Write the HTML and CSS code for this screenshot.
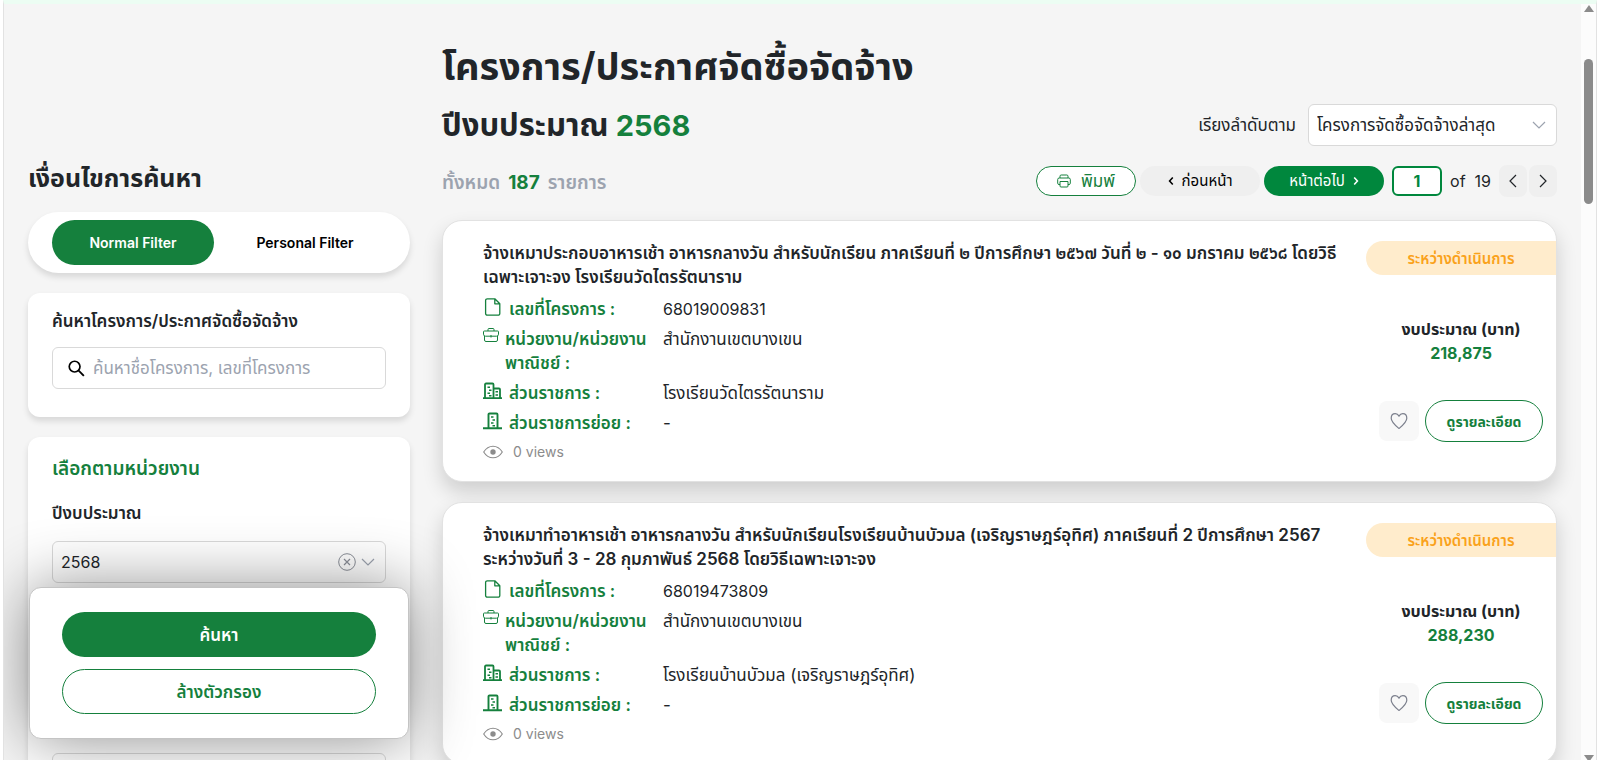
FILE: index.html
```html
<!DOCTYPE html>
<html lang="th">
<head>
    <meta charset="UTF-8">
    <meta name="viewport" content="width=device-width, initial-scale=1.0">
    <title>โครงการ/ประกาศจัดซื้อจัดจ้าง</title>
    <link rel="stylesheet" href="styles.css">
</head>
<body>

<svg class="sprite" aria-hidden="true">
    <symbol id="i-file" viewBox="0 0 19 18">
        <path d="M4.300 .8h7.500l5 5v9.700a1.700 1.700 0 0 1-1.700 1.700H4.300a1.700 1.700 0 0 1-1.700-1.700v-13A1.700 1.700 0 0 1 4.300.8zM11.800.8v5h5" fill="none" stroke="currentColor" stroke-width="1.300" stroke-linejoin="round"/>
    </symbol>
    <symbol id="i-case" viewBox="0 0 16 14">
        <path d="M5 3V1.500a1 1 0 0 1 1-1h4a1 1 0 0 1 1 1V3M1.300 3h13.400a.8.8 0 0 1 .8.800v2.400a2 2 0 0 1-2 2h-11a2 2 0 0 1-2-2V3.800a.8.800 0 0 1 .8-.8zM1.500 8v4a1.500 1.500 0 0 0 1.500 1.500h10a1.500 1.500 0 0 0 1.500-1.500V8M8 7v2.500" fill="none" stroke="currentColor" stroke-width="1"/>
    </symbol>
    <symbol id="i-dept" viewBox="0 0 19 18">
        <path d="M0 16.200h19M2 16V2.500a1 1 0 0 1 1-1h6.500a1 1 0 0 1 1 1V16M11 6.500h5a1 1 0 0 1 1 1V16" fill="none" stroke="currentColor" stroke-width="1.800"/>
        <path d="M4.500 5.200H7M6 8.200h2.500M4.500 11.200H7M6 13.700h2.500M12.500 9.700h2.500M12.500 13h2.500" stroke="currentColor" stroke-width="1.400"/>
    </symbol>
    <symbol id="i-sub" viewBox="0 0 19 18">
        <path d="M0 16.200h19M5.500 16V2.500a1 1 0 0 1 1-1h7a1 1 0 0 1 1 1V16" fill="none" stroke="currentColor" stroke-width="1.900"/>
        <path d="M8 5h2.500M9.500 8H12M8 11h2.500M9.500 13.700H12" stroke="currentColor" stroke-width="1.400"/>
    </symbol>
    <symbol id="i-eye" viewBox="0 0 20 14">
        <path d="M.7 7C3 3.200 6.200 1.200 10 1.200S17 3.200 19.300 7C17 10.800 13.800 12.800 10 12.800S3 10.800.7 7z" fill="none" stroke="currentColor" stroke-width="1.100"/>
        <circle cx="10" cy="7" r="2.700" fill="currentColor"/>
    </symbol>
    <symbol id="i-heart" viewBox="0 0 18 18">
        <path d="M9 16.500C5.500 13.500 1.200 10 1.200 6.200c0-2.800 1.800-4.600 4-4.600 1.800 0 3 1 3.800 2.500.8-1.500 2-2.500 3.800-2.500 2.200 0 4 1.800 4 4.600 0 3.800-4.300 7.300-7.800 10.300z" fill="none" stroke="currentColor" stroke-width="1.200" stroke-linejoin="round"/>
    </symbol>
    <symbol id="i-down" viewBox="0 0 14 8">
        <path d="M1 1l6 6 6-6" fill="none" stroke="currentColor" stroke-width="1.200"/>
    </symbol>
    <symbol id="i-left" viewBox="0 0 8 14">
        <path d="M7 1L1 7l6 6" fill="none" stroke="currentColor" stroke-width="1.200"/>
    </symbol>
    <symbol id="i-right" viewBox="0 0 8 14">
        <path d="M1 1l6 6-6 6" fill="none" stroke="currentColor" stroke-width="1.200"/>
    </symbol>
</svg>

<div class="page">
    <aside class="sidebar">
        <h2>เงื่อนไขการค้นหา</h2>

        <div class="tabs">
            <button type="button" class="tab active">Normal Filter</button>
            <button type="button" class="tab">Personal Filter</button>
        </div>

        <div class="panel search-panel">
            <label for="keyword">ค้นหาโครงการ/ประกาศจัดซื้อจัดจ้าง</label>
            <div class="field search-field">
                <svg class="icon-search" viewBox="0 0 18 18"><circle cx="7" cy="7" r="5.700" fill="none" stroke="currentColor" stroke-width="1.800"/><path d="M11.300 11.300l5.500 5.500" stroke="currentColor" stroke-width="2"/></svg>
                <input type="text" id="keyword" placeholder="ค้นหาชื่อโครงการ, เลขที่โครงการ">
            </div>
        </div>

        <div class="panel filter-panel">
            <h3>เลือกตามหน่วยงาน</h3>
            <label for="year">ปีงบประมาณ</label>
            <div class="field">
                <select id="year" class="num">
                    <option>2568</option>
                    <option>2567</option>
                </select>
                <svg class="icon-clear" viewBox="0 0 18 18"><circle cx="9" cy="9" r="8.300" fill="none" stroke="currentColor"/><path d="M6 6l6 6M12 6l-6 6" stroke="currentColor" stroke-width="1.200"/></svg>
                <svg class="icon-down"><use href="#i-down"/></svg>
            </div>
            <label for="agency">หน่วยงาน</label>
            <div class="field agency-field">
                <select id="agency">
                    <option>สำนักงานเขต</option>
                </select>
            </div>
        </div>

        <div class="actions">
            <button type="button" class="btn-search">ค้นหา</button>
            <button type="button" class="btn-clear">ล้างตัวกรอง</button>
        </div>
    </aside>

    <main class="content">
        <h1>โครงการ/ประกาศจัดซื้อจัดจ้าง</h1>

        <div class="row year-row">
            <h2>ปีงบประมาณ <span class="green">2568</span></h2>
            <div class="sort">
                <label for="sort">เรียงลำดับตาม</label>
                <div class="field">
                    <select id="sort">
                        <option>โครงการจัดซื้อจัดจ้างล่าสุด</option>
                    </select>
                    <svg class="icon-down"><use href="#i-down"/></svg>
                </div>
            </div>
        </div>

        <div class="row count-row">
            <p class="count"><span>ทั้งหมด</span><span class="green">187</span><span>รายการ</span></p>
            <div class="pager">
                <button type="button" class="btn-print">
                    <svg viewBox="0 0 14 14"><path d="M3 4V2.200A1.200 1.200 0 0 1 4.200 1h5.600A1.200 1.200 0 0 1 11 2.200V4M3 10.500H2a1.300 1.300 0 0 1-1.300-1.300V5.500A1.500 1.500 0 0 1 2.200 4h9.600a1.500 1.500 0 0 1 1.500 1.500v3.700a1.300 1.300 0 0 1-1.300 1.300h-1M3 7.500h8V12a1 1 0 0 1-1 1H4a1 1 0 0 1-1-1z" fill="none" stroke="currentColor"/></svg>
                    พิมพ์
                </button>
                <button type="button" class="btn-page"><svg viewBox="0 0 8 14"><path d="M6.500 2L2 7l4.500 5" fill="none" stroke="currentColor" stroke-width="2.200"/></svg>ก่อนหน้า</button>
                <button type="button" class="btn-page next">หน้าต่อไป<svg viewBox="0 0 8 14"><path d="M1.500 2L6 7l-4.500 5" fill="none" stroke="currentColor" stroke-width="2.200"/></svg></button>
                <input type="text" class="page-input" value="1" aria-label="หน้า">
                <span class="page-total">of&nbsp; 19</span>
                <button type="button" class="btn-arrow" aria-label="ก่อนหน้า"><svg><use href="#i-left"/></svg></button>
                <button type="button" class="btn-arrow" aria-label="ถัดไป"><svg><use href="#i-right"/></svg></button>
            </div>
        </div>

        <article class="card">
            <div class="info">
                <h3>จ้างเหมาประกอบอาหารเช้า อาหารกลางวัน สำหรับนักเรียน ภาคเรียนที่ ๒ ปีการศึกษา ๒๕๖๗ วันที่ ๒ - ๑๐ มกราคม ๒๕๖๘ โดยวิธี<br>เฉพาะเจาะจง โรงเรียนวัดไตรรัตนาราม</h3>
                <dl>
                    <dt><svg><use href="#i-file"/></svg>เลขที่โครงการ :</dt>
                    <dd class="num">68019009831</dd>
                    <dt class="wide"><svg><use href="#i-case"/></svg><span>หน่วยงาน/หน่วยงาน<br>พาณิชย์ :</span></dt>
                    <dd>สำนักงานเขตบางเขน</dd>
                    <dt><svg><use href="#i-dept"/></svg>ส่วนราชการ :</dt>
                    <dd>โรงเรียนวัดไตรรัตนาราม</dd>
                    <dt><svg><use href="#i-sub"/></svg>ส่วนราชการย่อย :</dt>
                    <dd>-</dd>
                </dl>
                <p class="views"><svg><use href="#i-eye"/></svg>0 views</p>
            </div>
            <div class="side">
                <span class="status">ระหว่างดำเนินการ</span>
                <p class="budget">งบประมาณ (บาท)<br><span class="green">218,875</span></p>
                <div class="links">
                    <button type="button" class="btn-like" aria-label="ถูกใจ"><svg><use href="#i-heart"/></svg></button>
                    <a class="btn-detail" href="#">ดูรายละเอียด</a>
                </div>
            </div>
        </article>

        <article class="card">
            <div class="info">
                <h3>จ้างเหมาทำอาหารเช้า อาหารกลางวัน สำหรับนักเรียนโรงเรียนบ้านบัวมล (เจริญราษฎร์อุทิศ) ภาคเรียนที่ 2 ปีการศึกษา 2567<br>ระหว่างวันที่ 3 - 28 กุมภาพันธ์ 2568 โดยวิธีเฉพาะเจาะจง</h3>
                <dl>
                    <dt><svg><use href="#i-file"/></svg>เลขที่โครงการ :</dt>
                    <dd class="num">68019473809</dd>
                    <dt class="wide"><svg><use href="#i-case"/></svg><span>หน่วยงาน/หน่วยงาน<br>พาณิชย์ :</span></dt>
                    <dd>สำนักงานเขตบางเขน</dd>
                    <dt><svg><use href="#i-dept"/></svg>ส่วนราชการ :</dt>
                    <dd>โรงเรียนบ้านบัวมล (เจริญราษฎร์อุทิศ)</dd>
                    <dt><svg><use href="#i-sub"/></svg>ส่วนราชการย่อย :</dt>
                    <dd>-</dd>
                </dl>
                <p class="views"><svg><use href="#i-eye"/></svg>0 views</p>
            </div>
            <div class="side">
                <span class="status">ระหว่างดำเนินการ</span>
                <p class="budget">งบประมาณ (บาท)<br><span class="green">288,230</span></p>
                <div class="links">
                    <button type="button" class="btn-like" aria-label="ถูกใจ"><svg><use href="#i-heart"/></svg></button>
                    <a class="btn-detail" href="#">ดูรายละเอียด</a>
                </div>
            </div>
        </article>
    </main>

    <div class="scrollbar" aria-hidden="true">
        <span class="arrow up"></span>
        <span class="thumb"></span>
        <span class="arrow down"></span>
    </div>
</div>

</body>
</html>
```
FILE: styles.css
```css
* {
    box-sizing: border-box;
}

body {
    margin: 0;
    background: #fff;
    color: #212529;
    font-family: Inter, "Noto Sans Thai", "Noto Sans", sans-serif;
    font-size: 17px;
    line-height: 24px;
    height: 100vh;
    overflow: hidden;
}

h1, h2, h3, p, dl, dd {
    margin: 0;
}

button, input, select {
    font: inherit;
    color: inherit;
}

button {
    border: none;
    padding: 0;
    cursor: pointer;
}

.sprite {
    display: none;
}

.green {
    color: #15803d;
}

.page {
    display: flex;
    height: 100vh;
    margin: 0 2px 0 3px;
    border: solid #e2e2e2;
    border-width: 0 1px;
    border-top: 4px solid #ecfdf3;
    background: #f5f5f5;
    overflow: hidden;
}

/* sidebar */
.sidebar {
    flex: none;
    width: 382px;
    margin: 156px 32px 0 24px;
    position: relative;
}

.sidebar h2 {
    font-size: 25px;
    line-height: 36px;
    margin-bottom: 16px;
}

.tabs {
    display: flex;
    gap: 10px;
    padding: 8px 24px;
    background: #fff;
    border-radius: 32px;
    box-shadow: 0 4px 6px rgba(0, 0, 0, 0.12);
}

.tab {
    flex: 1;
    height: 45px;
    border-radius: 24px;
    background: none;
    color: #000;
    font-size: 14px;
    font-weight: 600;
}

.tab.active {
    background: #15803d;
    color: #fff;
}

.panel {
    margin-top: 20px;
    padding: 16px 24px;
    background: #fff;
    border-radius: 12px;
    box-shadow: 0 4px 6px rgba(0, 0, 0, 0.12);
}

.panel label {
    display: block;
    font-weight: 600;
}

.search-panel {
    height: 124px;
}

.field {
    display: flex;
    align-items: center;
    height: 42px;
    padding: 0 8px;
    border: 1px solid #d9d9d9;
    border-radius: 6px;
    background: #fff;
}

.field input, .field select {
    flex: 1;
    min-width: 0;
    height: 40px;
    padding: 0;
    border: none;
    outline: none;
    background: none;
    appearance: none;
}

.field input::placeholder {
    color: #9ca3af;
}

.search-field {
    margin-top: 14px;
    padding-left: 15px;
    gap: 8px;
}

.field .num, .num {
    font-size: 16px;
}

.icon-search {
    width: 17px;
    height: 17px;
    color: #000;
}

.icon-clear {
    width: 18px;
    height: 18px;
    margin-right: 5px;
    color: #8b8f98;
}

.icon-down {
    width: 14px;
    height: 8px;
    margin-right: 2px;
    color: #9ca3af;
}

.filter-panel {
    height: 400px;
}

.filter-panel h3 {
    margin-bottom: 16px;
    font-size: 19px;
    font-weight: 600;
    line-height: 32px;
    color: #15803d;
}

.filter-panel .field {
    margin: 16px 0 24px;
}

.filter-panel .agency-field {
    margin-top: 122px;
}

/* floats over the filter list */
.actions {
    position: absolute;
    top: 427px;
    left: 1px;
    right: 1px;
    display: flex;
    flex-direction: column;
    gap: 12px;
    padding: 24px 32px;
    background: #fff;
    border: 1px solid #c4c4c4;
    border-radius: 12px;
    box-shadow: 0 0 64px rgba(0, 0, 0, 0.45);
}

.actions button {
    height: 45px;
    border-radius: 24px;
    font-weight: 600;
}

.btn-search {
    background: #15803d;
    color: #fff;
}

.btn-clear {
    background: #fff;
    color: #15803d;
    border: 1px solid #15803d;
}

/* main column */
.content {
    flex: 1;
    min-width: 0;
    padding-top: 32px;
}

.content h1 {
    font-size: 38px;
    line-height: 60px;
}

.row {
    display: flex;
    align-items: center;
    justify-content: space-between;
}

.year-row {
    height: 58px;
}

.year-row h2 {
    font-size: 31px;
    line-height: 44px;
}

.year-row h2 .green {
    font-size: 29px;
}

.sort {
    display: flex;
    align-items: center;
    gap: 12px;
}

.sort .field {
    width: 249px;
}

.count-row {
    height: 54px;
    margin-bottom: 12px;
}

.count {
    display: flex;
    gap: 8px;
    padding-top: 3px;
    font-size: 19px;
    font-weight: 600;
    color: #9ca3af;
}

.count .green {
    font-weight: 700;
}

.pager {
    display: flex;
    align-items: center;
    font-size: 16px;
}

.btn-print, .btn-page {
    display: flex;
    align-items: center;
    justify-content: center;
    height: 30px;
    border-radius: 16px;
}

.btn-print {
    width: 100px;
    gap: 10px;
    background: #fff;
    border: 1px solid #15803d;
    color: #15803d;
    font-size: 17px;
}

.btn-print svg {
    width: 14px;
    height: 14px;
}

.btn-page {
    width: 120px;
    gap: 8px;
    margin-left: 4px;
    background: #efefef;
    color: #000;
    font-size: 15px;
}

.btn-page svg {
    width: 6px;
    height: 10px;
}

.btn-page.next {
    background: #00873d;
    color: #fff;
}

.page-input {
    width: 50px;
    height: 30px;
    margin: 0 8px;
    padding: 0;
    border: 2px solid #00873d;
    border-radius: 6px;
    background: #fff;
    text-align: center;
    font-weight: 700;
    color: #00873d;
}

.page-total {
    margin-right: 6px;
}

.btn-arrow {
    display: flex;
    align-items: center;
    justify-content: center;
    width: 28px;
    height: 32px;
    margin-left: 2px;
    border-radius: 8px;
    background: #efefef;
}

.btn-arrow svg {
    width: 8px;
    height: 14px;
}

/* project cards */
.card {
    display: flex;
    justify-content: space-between;
    height: 262px;
    margin-bottom: 20px;
    border: 1px solid #e2e2e2;
    border-radius: 20px;
    background: #fff;
    box-shadow: 0 10px 20px rgba(0, 0, 0, 0.16);
}

.info {
    flex: 1;
    min-width: 0;
    padding: 20px 0 0 40px;
}

.info h3 {
    font-size: 17px;
    font-weight: 600;
    margin-bottom: 8px;
}

.info dl {
    display: grid;
    grid-template-columns: 172px 1fr;
    gap: 6px 8px;
}

.info dt {
    display: flex;
    gap: 7px;
    font-weight: 600;
    color: #15803d;
}

.info dt svg {
    flex: none;
    width: 19px;
    height: 18px;
    margin-top: 1px;
}

.info dt.wide {
    gap: 6px;
}

.info dt.wide svg {
    width: 16px;
    height: 14px;
}

.views {
    display: flex;
    align-items: center;
    gap: 10px;
    margin-top: 5px;
    font-size: 14px;
    color: #8c8c8c;
}

.views svg {
    width: 20px;
    height: 14px;
}

.side {
    flex: none;
    width: 190px;
    padding-top: 20px;
    text-align: center;
}

.status {
    display: block;
    height: 34px;
    line-height: 36px;
    border-radius: 17px 0 0 17px;
    background: #ffeccc;
    color: #faa21b;
    font-size: 15px;
    font-weight: 600;
}

.budget {
    margin-top: 42px;
    font-size: 16px;
    font-weight: 700;
}

.links {
    display: flex;
    align-items: center;
    gap: 6px;
    margin: 35px 13px 0;
}

.btn-like {
    display: flex;
    align-items: center;
    justify-content: center;
    width: 40px;
    height: 40px;
    border-radius: 8px;
    background: #f8f8f8;
    color: #7b7f8c;
}

.btn-like svg {
    width: 18px;
    height: 18px;
}

.btn-detail {
    flex: 1;
    height: 42px;
    line-height: 42px;
    border: 1px solid #15803d;
    border-radius: 21px;
    color: #15803d;
    font-size: 14px;
    font-weight: 700;
    text-decoration: none;
}

/* scroll track */
.scrollbar {
    display: flex;
    flex-direction: column;
    align-items: center;
    flex: none;
    width: 15px;
    margin-left: 24px;
    background: #fcfcfc;
}

.arrow {
    border: solid transparent;
    border-width: 0 5px;
}

.arrow.up {
    margin-top: 1px;
    border-bottom: 7px solid #8b8b8b;
}

.arrow.down {
    margin-top: auto;
    margin-bottom: -2px;
    border-top: 7px solid #8b8b8b;
}

.thumb {
    width: 9px;
    height: 145px;
    margin-top: 47px;
    border-radius: 5px;
    background: #8b8b8b;
}
```
